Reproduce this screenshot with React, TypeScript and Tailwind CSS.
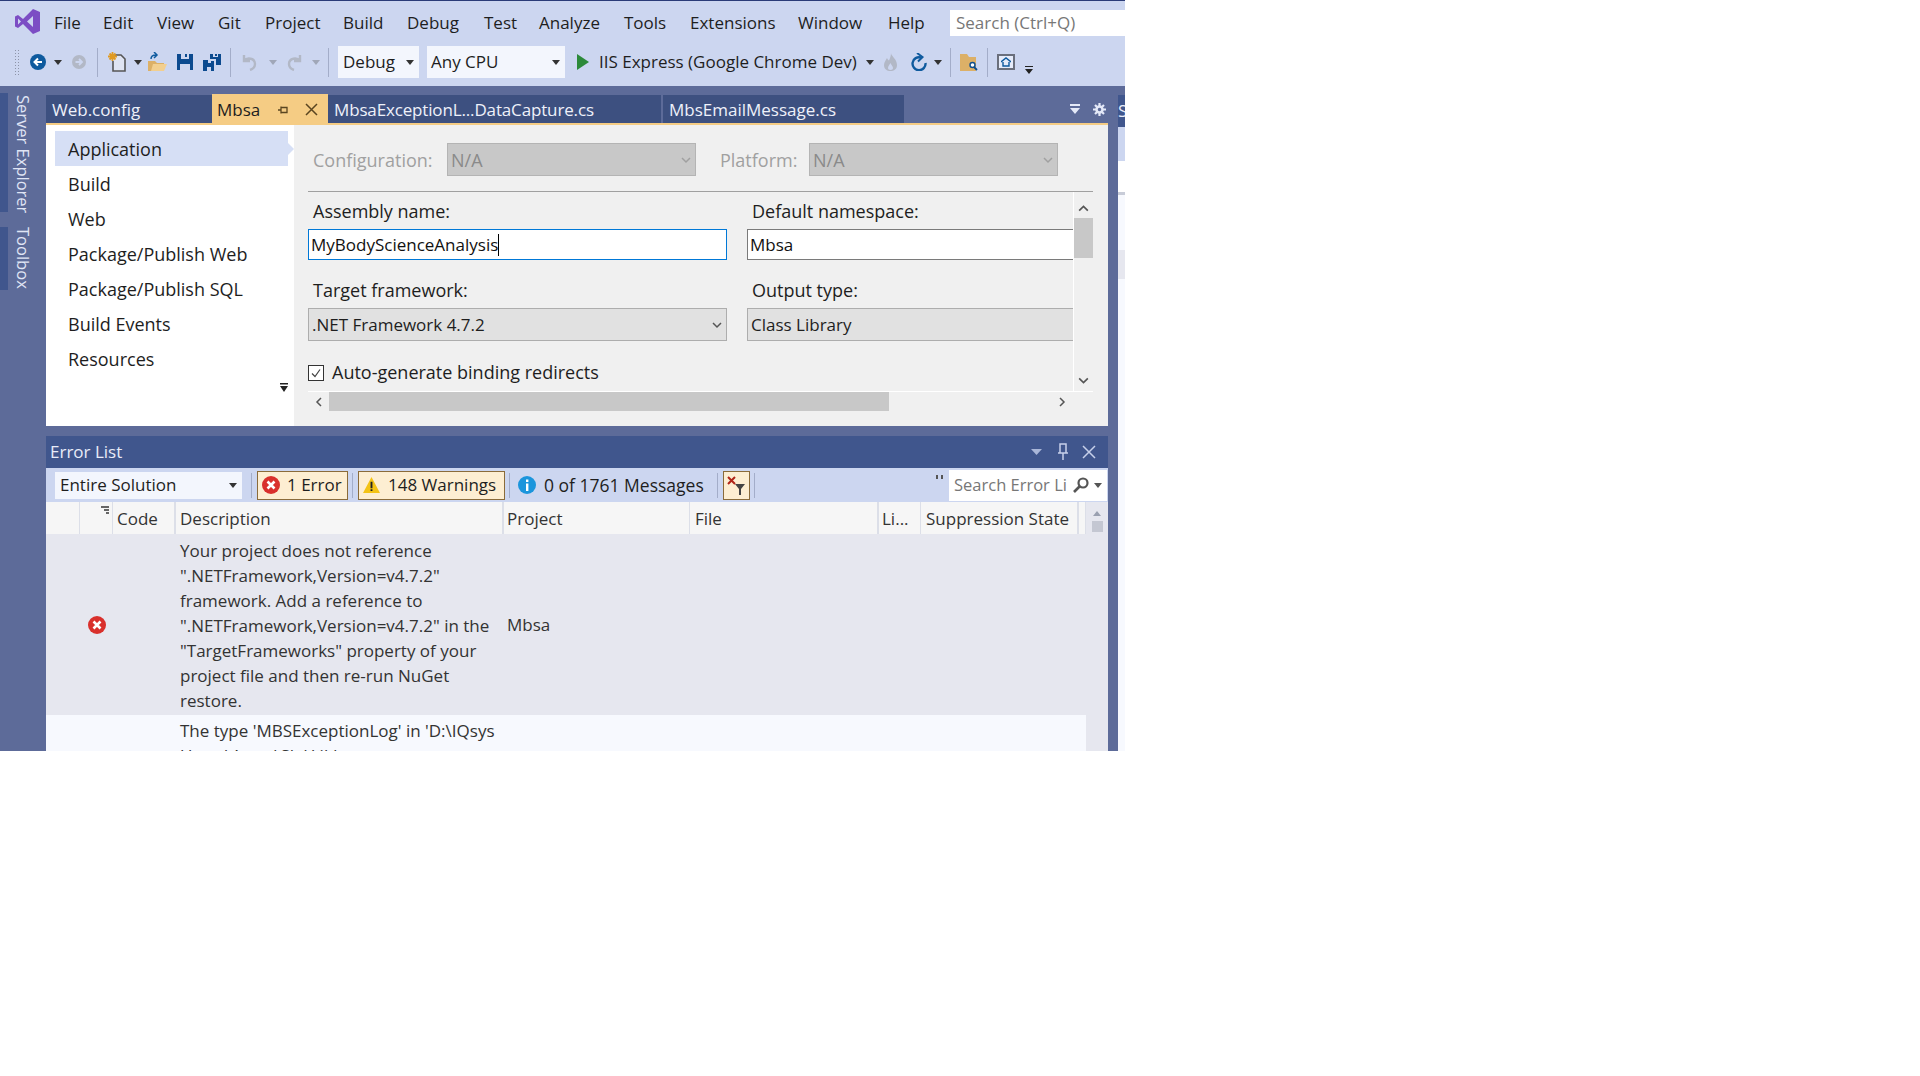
const menuItems = [
  { label: "File", className: "w-[49px]" },
  { label: "Edit", className: "w-[54px]" },
  { label: "View", className: "w-[61px]" },
  { label: "Git", className: "w-[47px]" },
  { label: "Project", className: "w-[78px]" },
  { label: "Build", className: "w-[64px]" },
  { label: "Debug", className: "w-[77px]" },
  { label: "Test", className: "w-[55px]" },
  { label: "Analyze", className: "w-[85px]" },
  { label: "Tools", className: "w-[66px]" },
  { label: "Extensions", className: "w-[108px]" },
  { label: "Window", className: "w-[90px]" },
  { label: "Help", className: "w-[62px]" },
];
const navItems = ["Build", "Web", "Package/Publish Web", "Package/Publish SQL", "Build Events", "Resources"];
const descriptionLines = [
  "Your project does not reference",
  "\".NETFramework,Version=v4.7.2\"",
  "framework. Add a reference to",
  "\".NETFramework,Version=v4.7.2\" in the",
  "\"TargetFrameworks\" property of your",
  "project file and then re-run NuGet",
  "restore.",
];

const Caret = ({ className = "" }: { className?: string }) => (
  <svg width="8" height="5" viewBox="0 0 8 5" className={`shrink-0 ${className}`} fill="currentColor">
    <path d="M0 0h8L4 5z" />
  </svg>
);

const Chevron = ({ dir = "down", color = "#555", size = 12 }: { dir?: "down" | "up" | "left" | "right"; color?: string; size?: number }) => {
  const paths = { down: "M2 4l4 4 4-4", up: "M2 8l4-4 4 4", left: "M8 2L4 6l4 4", right: "M4 2l4 4-4 4" };
  return (
    <svg width={size} height={size} viewBox="0 0 12 12" fill="none" stroke={color} strokeWidth="1.5" className="shrink-0">
      <path d={paths[dir]} />
    </svg>
  );
};

const Sep = ({ className = "" }: { className?: string }) => <div className={`w-px shrink-0 bg-[#a3adc9] ${className}`} />;

const ErrorIcon = ({ size = 18 }: { size?: number }) => (
  <svg width={size} height={size} viewBox="0 0 18 18" className="shrink-0">
    <circle cx="9" cy="9" r="9" fill="#d9302c" />
    <path d="M5.500 5.500l7 7M12.500 5.500l-7 7" stroke="#fff" strokeWidth="2.600" />
  </svg>
);

const VsLogo = () => (
  <svg width="25" height="25" viewBox="0 0 25 25" className="shrink-0">
    <path
      fillRule="evenodd"
      fill="#7c4dc4"
      d="M18 0l7 3v19l-7 3L8 15l-5 4-3-1.500V7.500L3 6l5 4zM3 9.500v6L6 12.500zM18 7l-6 5.500 6 5.500z"
    />
  </svg>
);

const Toolbar = () => (
  <div className="flex h-[34px] items-center text-[#1e1e1e]">
    <div className="ml-[14px] h-[26px] w-[6px] shrink-0 bg-[radial-gradient(#8d94a8_1px,transparent_1px)] bg-[length:3px_3px]" />
    <svg width="16" height="16" viewBox="0 0 16 16" className="ml-[10px] shrink-0">
      <circle cx="8" cy="8" r="8" fill="#0e5a9e" />
      <path d="M12 8H5M8 4.500L4.500 8 8 11.500" stroke="#fff" strokeWidth="2" fill="none" />
    </svg>
    <Caret className="ml-[8px] text-[#333]" />
    <svg width="14" height="14" viewBox="0 0 14 14" className="ml-[10px] shrink-0">
      <circle cx="7" cy="7" r="7" fill="#b2b8c6" />
      <path d="M3.500 7h6M7 4l3 3-3 3" stroke="#ccd6f0" strokeWidth="1.800" fill="none" />
    </svg>
    <Sep className="ml-[11px] h-[29px]" />
    <svg width="18" height="20" viewBox="0 0 18 20" className="ml-[10px] shrink-0">
      <path d="M7 3h6l4 4v12H5V9" fill="#dfe4f2" stroke="#555" strokeWidth="1.600" />
      <path d="M4.500 0v9M0 4.500h9M1.500 1.500l6 6M7.500 1.500l-6 6" stroke="#e09a22" strokeWidth="1.800" />
    </svg>
    <Caret className="ml-[8px] text-[#333]" />
    <svg width="19" height="20" viewBox="0 0 19 20" className="ml-[6px] shrink-0">
      <path d="M0 9h7l2 2h7v8H0z" fill="#dcb067" />
      <path d="M3 19l2-7h14l-3 7z" fill="#f2cf8f" />
      <path d="M3 7c0-3 2-4 5-4M6 0l3 3-3 3" stroke="#0e5a9e" strokeWidth="1.500" fill="none" />
    </svg>
    <svg width="16" height="16" viewBox="0 0 16 16" className="ml-[10px] shrink-0">
      <path fillRule="evenodd" fill="#0b4a8f" d="M0 0h16v16H0zM4 0v5h8V0h-2v3H8V0zM3 10v6h10v-6z" />
    </svg>
    <svg width="18" height="17" viewBox="0 0 18 17" className="ml-[10px] shrink-0">
      <path fill="#0b4a8f" d="M0 6h5v3h3V7h3v10H8v-4H4v4H0z" />
      <path fillRule="evenodd" fill="#0b4a8f" d="M7 0h11v11h-5V5H7zM10 0v3h5V0h-1v2h-2V0z" />
    </svg>
    <Sep className="ml-[9px] h-[29px]" />
    <svg width="15" height="17" viewBox="0 0 15 17" className="ml-[11px] shrink-0" fill="none" stroke="#b2b8c6" strokeWidth="2.400">
      <path d="M2 1v6h6M2 7c3-4 11-3 11 3 0 3-2 5-5 6" />
    </svg>
    <Caret className="ml-[12px] text-[#a0a7b8]" />
    <svg width="15" height="17" viewBox="0 0 15 17" className="ml-[10px] shrink-0" fill="none" stroke="#b2b8c6" strokeWidth="2.400">
      <path d="M13 1v6H7M13 7C10 3 2 4 2 10c0 3 2 5 5 6" />
    </svg>
    <Caret className="ml-[10px] text-[#a0a7b8]" />
    <Sep className="ml-[8px] h-[29px]" />
    <div className="ml-[9px] flex h-[32px] w-[81px] shrink-0 items-center justify-between bg-[#f3f6fd] pl-[5px] pr-[5px]">
      <span>Debug</span>
      <Caret className="text-[#333]" />
    </div>
    <div className="ml-[8px] flex h-[32px] w-[138px] shrink-0 items-center justify-between bg-[#f3f6fd] pl-[4px] pr-[5px]">
      <span>Any CPU</span>
      <Caret className="text-[#333]" />
    </div>
    <svg width="12" height="16" viewBox="0 0 12 16" className="ml-[12px] shrink-0">
      <path d="M0 0l12 8-12 8z" fill="#2c8a3a" />
    </svg>
    <span className="ml-[10px] w-[260px] shrink-0 whitespace-nowrap">IIS Express (Google Chrome Dev)</span>
    <Caret className="ml-[7px] text-[#333]" />
    <svg width="13" height="18" viewBox="0 0 13 18" className="ml-[10px] shrink-0" fill="#b2b8c6">
      <path fillRule="evenodd" d="M7 0c0 3 6 6 6 12 0 4-3 6-6.500 6S0 16 0 12c0-3 2-5 3-7 .5 1 1 2 2 2.500C6 5 7 3 7 0zM6.500 10C5.500 12 4 13 4 15c0 1 1 2 2.500 2S9 16 9 15c0-2-2-3-2.500-5z" />
    </svg>
    <svg width="16" height="18" viewBox="0 0 16 18" className="ml-[14px] shrink-0" fill="none" stroke="#0e5a9e" strokeWidth="2.400">
      <path d="M10 4.500A6.500 6.500 0 1 0 14.500 10" />
      <path d="M6 0l5.500 4L7 8.500" strokeWidth="2" />
    </svg>
    <Caret className="ml-[7px] text-[#333]" />
    <Sep className="ml-[8px] h-[29px]" />
    <svg width="18" height="17" viewBox="0 0 18 17" className="ml-[9px] shrink-0">
      <path d="M0 0h7l2 3h7v14H0z" fill="#dcb067" />
      <circle cx="12.500" cy="11" r="2.500" fill="#fff" stroke="#0e4f8f" strokeWidth="1.400" />
      <path d="M14 13l3 3" stroke="#0e4f8f" strokeWidth="1.800" />
    </svg>
    <Sep className="ml-[9px] h-[29px]" />
    <div className="ml-[9px] flex h-[16px] w-[18px] shrink-0 items-center justify-center border-2 border-[#6a6f7c] bg-[#e6ecfa]">
      <svg width="10" height="10" viewBox="0 0 10 10">
        <path d="M0 5l5-4 5 4M2 5v4h6V5" stroke="#0e5a9e" strokeWidth="1.400" fill="none" />
      </svg>
    </div>
    <svg width="8" height="8" viewBox="0 0 8 8" className="ml-[10px] mt-[15px] shrink-0 text-[#222]" fill="currentColor">
      <path d="M0 0h8v1H0zM0 3h8L4 8z" />
    </svg>
  </div>
);

const Field = ({ label, className = "" }: { label: string; className?: string }) => (
  <div className={`h-[25px] pl-[5px] pt-px leading-[25px] ${className}`}>{label}</div>
);

const ProjectPane = () => (
  <div className="flex h-[301px] shrink-0 text-[18px]">
    <div className="flex w-[248px] shrink-0 flex-col bg-white pl-[9px] pr-[6px] pt-[6px] text-[#1e1e1e]">
      <div className="relative flex h-[35px] shrink-0 items-center bg-[#d6dff5] pl-[13px] pt-px">
        Application
        <svg width="6" height="12" viewBox="0 0 6 12" className="absolute left-full top-[12px]">
          <path d="M0 0l6 6-6 6z" fill="#d6dff5" />
        </svg>
      </div>
      {navItems.map((item) => (
        <div key={item} className="flex h-[35px] shrink-0 items-center pl-[13px] pt-px">
          {item}
        </div>
      ))}
      <div className="mt-[7px] flex justify-end">
        <svg width="8" height="9" viewBox="0 0 8 9" fill="#222">
          <path d="M0 0h8v1.500H0zM0 3h8L4 9z" />
        </svg>
      </div>
    </div>
    <div className="flex flex-1 flex-col bg-[#f0f0f0] pl-[14px] pt-[18px] text-[#1e1e1e]">
      <div className="flex h-[33px] shrink-0 items-center text-[#a0a0a0]">
        <span className="w-[139px] shrink-0 pl-[5px] pt-px">Configuration:</span>
        <div className="flex h-[33px] w-[249px] shrink-0 items-center justify-between border border-[#b4b4b4] bg-[#c8c8c8] pl-[3px] pr-[3px] pt-px text-[#8a8a8a]">
          N/A
          <Chevron color="#a0a0a0" />
        </div>
        <span className="ml-[24px] w-[89px] shrink-0 pt-px">Platform:</span>
        <div className="flex h-[33px] w-[249px] shrink-0 items-center justify-between border border-[#b4b4b4] bg-[#c8c8c8] pl-[3px] pr-[3px] pt-px text-[#8a8a8a]">
          N/A
          <Chevron color="#a0a0a0" />
        </div>
      </div>
      <div className="mt-[15px] h-px w-[785px] shrink-0 bg-[#a0a0a0]" />
      <div className="flex h-[200px] w-[785px] shrink-0 overflow-hidden border-b border-white">
        <div className="flex w-[765px] shrink-0 flex-col pt-[6px]">
          <div className="flex gap-[20px]">
            <div className="w-[419px] shrink-0">
              <Field label="Assembly name:" />
              <div className="mt-[6px] flex h-[31px] items-center border border-[#0078d7] bg-white pl-[2px] pt-px text-[17px] text-[#111]">
                MyBodyScienceAnalysis
                <div className="h-[22px] w-px bg-black" />
              </div>
              <Field label="Target framework:" className="mt-[17px]" />
              <div className="mt-[6px] flex h-[33px] items-center justify-between border border-[#adadad] bg-[#e1e1e1] pl-[3px] pr-[3px] text-[17px]">
                .NET Framework 4.7.2
                <Chevron color="#555" />
              </div>
            </div>
            <div className="w-[326px] shrink-0">
              <Field label="Default namespace:" />
              <div className="mt-[6px] flex h-[31px] items-center border border-r-0 border-[#7a7a7a] bg-white pl-[2px] pt-px text-[17px] text-[#111]">Mbsa</div>
              <Field label="Output type:" className="mt-[17px]" />
              <div className="mt-[6px] flex h-[33px] items-center border border-r-0 border-[#adadad] bg-[#e1e1e1] pl-[3px] text-[17px]">Class Library</div>
            </div>
          </div>
          <div className="mt-[23px] flex h-[17px] items-center">
            <div className="flex h-[16px] w-[16px] shrink-0 items-center justify-center border border-[#333] bg-white">
              <svg width="12" height="12" viewBox="0 0 12 12" fill="none" stroke="#444" strokeWidth="1.200">
                <path d="M2 6.500l3 3 5-7" />
              </svg>
            </div>
            <span className="ml-[8px]">Auto-generate binding redirects</span>
          </div>
        </div>
        <div className="flex w-[20px] shrink-0 flex-col items-center border-l border-white pt-[10px]">
          <Chevron dir="up" color="#555" size={13} />
          <div className="mt-[3px] h-[40px] w-[19px] shrink-0 bg-[#c8c8c8]" />
          <div className="mt-auto pb-[4px]">
            <Chevron dir="down" color="#555" size={13} />
          </div>
        </div>
      </div>
      <div className="flex h-[19px] w-[765px] shrink-0 items-center">
        <div className="flex w-[21px] shrink-0 justify-center">
          <Chevron dir="left" color="#555" />
        </div>
        <div className="h-[19px] w-[560px] shrink-0 bg-[#c8c8c8]" />
        <div className="ml-auto flex w-[22px] justify-center">
          <Chevron dir="right" color="#555" />
        </div>
      </div>
    </div>
  </div>
);

const ErrorToolbar = () => (
  <div className="flex h-[34px] shrink-0 items-center bg-[#ccd6f0] text-[#1e1e1e]">
    <div className="ml-[9px] flex h-[27px] w-[187px] shrink-0 items-center justify-between bg-[#f3f6fd] pl-[5px] pr-[5px]">
      Entire Solution
      <Caret className="text-[#333]" />
    </div>
    <Sep className="ml-[9px] h-[25px]" />
    <div className="ml-[5px] flex h-[29px] w-[91px] shrink-0 items-center border border-[#8a6b3a] bg-[#fdeed2] pl-[4px]">
      <ErrorIcon size={18} />
      <span className="ml-[7px] whitespace-nowrap">1 Error</span>
    </div>
    <Sep className="ml-[4px] h-[25px]" />
    <div className="ml-[5px] flex h-[29px] w-[147px] shrink-0 items-center border border-[#8a6b3a] bg-[#fdeed2] pl-[4px]">
      <svg width="17" height="16" viewBox="0 0 18 17" className="shrink-0">
        <path d="M9 0l9 17H0z" fill="#f3c316" />
        <path d="M8 5h2v7H8zM8 13h2v2H8z" fill="#222" />
      </svg>
      <span className="ml-[8px] whitespace-nowrap">148 Warnings</span>
    </div>
    <Sep className="ml-[4px] h-[25px]" />
    <svg width="18" height="18" viewBox="0 0 18 18" className="ml-[8px] shrink-0">
      <circle cx="9" cy="9" r="9" fill="#1b95dc" />
      <path d="M8 7.500h2.400V15H8zM8 3.500h2.400V6H8z" fill="#fff" />
    </svg>
    <span className="ml-[8px] w-[160px] shrink-0 whitespace-nowrap text-[17.5px]">0 of 1761 Messages</span>
    <Sep className="ml-[13px] h-[25px]" />
    <div className="ml-[5px] flex h-[29px] w-[27px] shrink-0 items-center justify-center border border-[#8a6b3a] bg-[#fdeed2]">
      <svg width="19" height="19" viewBox="0 0 19 19">
        <path d="M1 1l7 7M8 1L1 8" stroke="#b02418" strokeWidth="2" />
        <path d="M8 8h10l-4 5v6h-2v-6z" fill="#444" />
      </svg>
    </div>
    <Sep className="ml-[4px] h-[25px]" />
    <div className="ml-auto mb-[16px] mr-[6px] flex gap-[3px]">
      <div className="h-[4px] w-[2px] bg-[#555]" />
      <div className="h-[4px] w-[2px] bg-[#555]" />
    </div>
    <div className="mr-px flex h-[31px] w-[158px] shrink-0 items-center bg-white pl-[5px] pr-[5px] text-[#777]">
      <span className="w-[118px] shrink-0 whitespace-nowrap text-[16.5px]">Search Error Li</span>
      <svg width="16" height="16" viewBox="0 0 16 16" className="ml-[1px] shrink-0" fill="none" stroke="#555" strokeWidth="2.200">
        <circle cx="10" cy="6" r="4.500" />
        <path d="M6.500 9.500L1 15" strokeWidth="2.600" />
      </svg>
      <Caret className="ml-[5px] text-[#555]" />
    </div>
  </div>
);

const ColHeader = ({ label, className }: { label?: string; className: string }) => (
  <div className={`flex h-full shrink-0 items-center whitespace-nowrap border-[#dcdfe8] pt-px text-[#333] ${className}`}>{label}</div>
);

const ErrorList = () => (
  <div className="flex flex-1 flex-col">
    <div className="flex h-[32px] shrink-0 items-center justify-between bg-[#40568d] pl-[4px] pr-[12px] text-[#e8ecf8]">
      Error List
      <div className="flex items-center">
        <svg width="11" height="6" viewBox="0 0 11 6" className="text-[#a9b6d8]" fill="currentColor">
          <path d="M0 0h11L5.500 6z" />
        </svg>
        <svg width="12" height="18" viewBox="0 0 12 18" className="ml-[15px]" fill="none" stroke="#c6d0ea" strokeWidth="1.500">
          <path d="M3 1h6v9H3zM1 10h10M6 10v7" />
        </svg>
        <svg width="14" height="14" viewBox="0 0 14 14" className="ml-[13px]" stroke="#c6d0ea" strokeWidth="1.500">
          <path d="M1 1l12 12M13 1L1 13" />
        </svg>
      </div>
    </div>
    <ErrorToolbar />
    <div className="flex h-[32px] shrink-0 bg-[#f6f6f6]">
      <ColHeader className="w-[33px]" />
      <div className="relative flex h-full w-[33px] shrink-0 items-center border-l border-[#dcdfe8]">
        <svg width="8" height="8" viewBox="0 0 8 8" className="absolute right-[3px] top-[4px]" fill="#666">
          <path d="M0 0h8v2H0zM3 3h5v2H3zM5 6h3v2H5z" />
        </svg>
      </div>
      <ColHeader label="Code" className="w-[62px] border-l pl-[4px]" />
      <ColHeader label="Description" className="w-[328px] border-l-2 pl-[4px]" />
      <ColHeader label="Project" className="w-[187px] border-l-2 pl-[3px]" />
      <ColHeader label="File" className="w-[188px] border-l pl-[5px]" />
      <ColHeader label="Li..." className="w-[43px] border-l-2 pl-[3px]" />
      <ColHeader label="Suppression State" className="w-[157px] border-l pl-[5px]" />
      <div className="w-[9px] shrink-0 border-l-2 border-r border-[#dcdfe8]" />
      <div className="flex w-[22px] shrink-0 flex-col items-center bg-[#e6e7ef] pt-[9px]">
        <Caret className="rotate-180 text-[#9aa0b0]" />
        <div className="mt-[5px] h-[11px] w-[11px] bg-[#c4c7d2]" />
      </div>
    </div>
    <div className="flex flex-1 overflow-hidden">
      <div className="flex w-[1040px] shrink-0 flex-col text-[#333]">
        <div className="flex h-[181px] shrink-0 items-center bg-[#e6e7ef]">
          <div className="w-[128px] shrink-0 pl-[42px]">
            <ErrorIcon size={18} />
          </div>
          <div className="w-[328px] shrink-0 whitespace-nowrap pl-[6px] pt-px leading-[25px]">
            {descriptionLines.map((line) => (
              <div key={line}>{line}</div>
            ))}
          </div>
          <div className="pl-[5px]">Mbsa</div>
        </div>
        <div className="h-[36px] shrink-0 overflow-hidden bg-[#f7f9fe] pl-[134px] pt-[3px] leading-[25px]">
          <div className="whitespace-nowrap">The type 'MBSExceptionLog' in 'D:\IQsys</div>
          <div className="whitespace-nowrap">Users\Amar\Sln\Lib\</div>
        </div>
      </div>
      <div className="flex-1 bg-[#e6e7ef]" />
    </div>
  </div>
);

export default function App() {
  return (
    <div className="h-[1076px] w-full bg-white text-[17px] font-['Open_Sans',sans-serif]">
      <div className="flex h-[751px] w-[1125px] flex-col overflow-hidden">
        <div className="h-px shrink-0 bg-[#2a3b78]" />
        <div className="h-[85px] shrink-0 bg-[#ccd6f0]">
          <div className="flex h-[44px] items-center text-[#1e1e1e]">
            <div className="mb-[4px] ml-[15px] shrink-0">
              <VsLogo />
            </div>
            <div className="ml-[14px] flex">
              {menuItems.map((item) => (
                <span key={item.label} className={item.className}>
                  {item.label}
                </span>
              ))}
            </div>
            <div className="flex h-[26px] flex-1 items-center bg-white pl-[6px] text-[#777]">Search (Ctrl+Q)</div>
          </div>
          <Toolbar />
        </div>
        <div className="flex flex-1 overflow-hidden bg-[#5d6b99]">
          <div className="w-[46px] shrink-0 pt-[7px] text-[16.500px]">
            <div className="flex h-[119px] items-start">
              <div className="h-full w-[8px] bg-[#40568d]" />
              <span className="ml-[2px] mt-[2px] whitespace-nowrap text-[#e0e5f5] [writing-mode:vertical-rl]">Server Explorer</span>
            </div>
            <div className="mt-[15px] flex h-[63px] items-start">
              <div className="h-full w-[8px] bg-[#40568d]" />
              <span className="ml-[2px] whitespace-nowrap text-[#e0e5f5] [writing-mode:vertical-rl]">Toolbox</span>
            </div>
          </div>
          <div className="flex w-[1062px] shrink-0 flex-col">
            <div className="flex h-[37px] shrink-0 items-end text-[#eef1fa]">
              <div className="flex h-[28px] w-[166px] items-center bg-[#3d5080] pl-[6px] pt-[2px]">Web.config</div>
              <div className="flex h-[29px] w-[116px] items-center bg-[#f5cc84] pl-[5px] pt-[2px] text-[#1e1e1e]">
                <span className="w-[60px] shrink-0">Mbsa</span>
                <svg width="12" height="12" viewBox="0 0 12 12" className="shrink-0" stroke="#5a4520" strokeWidth="1.300" fill="none">
                  <path d="M1 6h3M4 2.500v7M4 3.500h6v5H4" />
                </svg>
                <svg width="13" height="13" viewBox="0 0 13 13" className="ml-[16px] shrink-0" stroke="#5a4520" strokeWidth="1.500">
                  <path d="M1 1l11 11M12 1L1 12" />
                </svg>
              </div>
              <div className="flex h-[28px] w-[335px] items-center border-r-2 border-[#5d6b99] bg-[#3d5080] pl-[6px] pt-[2px] tracking-[-0.15px]">MbsaExceptionL...DataCapture.cs</div>
              <div className="flex h-[28px] w-[241px] items-center bg-[#3d5080] pl-[6px] pt-[2px]">MbsEmailMessage.cs</div>
              <div className="ml-auto flex h-[28px] items-center pr-[2px]">
                <svg width="10" height="10" viewBox="0 0 10 10" fill="#e4e9f8">
                  <path d="M0 0h10v2H0zM0 4h10l-5 6z" />
                </svg>
                <svg width="13" height="13" viewBox="0 0 13 13" className="ml-[13px]" fill="none" stroke="#e4e9f8">
                  <circle cx="6.500" cy="6.500" r="3" strokeWidth="2.500" />
                  <path d="M6.500 0v3M6.500 10v3M0 6.500h3M10 6.500h3M2 2l2 2M9 9l2 2M11 2L9 4M4 9l-2 2" strokeWidth="2.200" />
                </svg>
              </div>
            </div>
            <div className="h-[2px] shrink-0 bg-[#f5cc84]" />
            <ProjectPane />
            <div className="h-[10px] shrink-0" />
            <ErrorList />
          </div>
          <div className="w-[10px] shrink-0" />
          <div className="flex w-[7px] shrink-0 flex-col pt-[9px]">
            <div className="h-[32px] shrink-0 overflow-hidden bg-[#40568d] leading-[32px] text-[#e8ecf8]">S</div>
            <div className="h-[34px] shrink-0 bg-[#ccd6f0]" />
            <div className="h-[31px] shrink-0 bg-white" />
            <div className="h-[3px] shrink-0 bg-[#c8ccd8]" />
            <div className="h-[55px] shrink-0 bg-[#f7f9fe]" />
            <div className="h-[29px] shrink-0 bg-[#e6e7ef]" />
            <div className="flex-1 bg-[#f7f9fe]" />
          </div>
        </div>
      </div>
    </div>
  );
}
